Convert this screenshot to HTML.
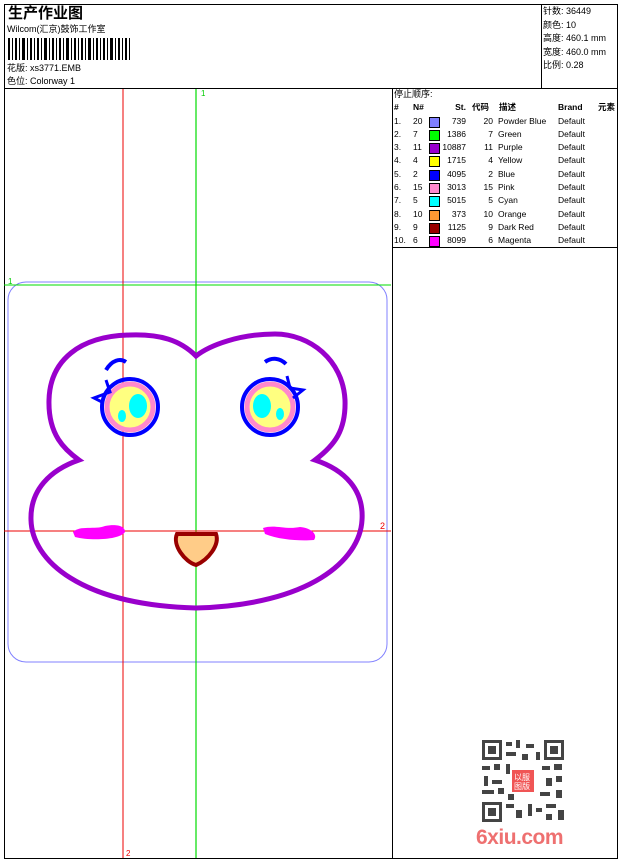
<!DOCTYPE html>
<html><head><meta charset="utf-8"><style>
body{margin:0;width:620px;height:860px;background:#fff;font-family:"Liberation Sans","Noto Sans CJK SC",sans-serif;position:relative;overflow:hidden;color:#000}
.a{position:absolute}
.t{font-size:9px;line-height:13px}
.r{position:absolute;left:393px;width:224px;height:13px;font-size:8.5px;line-height:13px;white-space:nowrap}
.r span{position:absolute}
.c1{left:1px}.c2{left:20px}.sw{left:36px;top:2px;width:9px;height:9px;border:1px solid #000}
.c3{right:151px;text-align:right}.c4{right:124px}.c5{left:105px}.c6{left:165px}.c7{right:2px}
</style></head><body>
<div class="a" style="left:4px;top:4px;width:612px;height:853px;border:1px solid #000"></div>
<div class="a" style="left:4px;top:88px;width:613px;border-top:1px solid #000"></div>
<div class="a" style="left:541px;top:4px;height:84px;border-left:1px solid #000"></div>
<div class="a" style="left:392px;top:88px;height:770px;border-left:1px solid #000"></div>
<div class="a" style="left:392px;top:247px;width:225px;border-top:1px solid #000"></div>
<div class="a" style="left:8px;top:2px;font-size:15px;font-weight:bold">生产作业图</div>
<div class="a t" style="left:7px;top:23px">Wilcom(汇京)鼓饰工作室</div>
<svg class="a" style="left:8px;top:38px" width="125" height="22"><g fill="#000">
<rect x="0" y="0" width="2" height="22"/><rect x="4" y="0" width="1" height="22"/><rect x="7" y="0" width="2" height="22"/><rect x="11" y="0" width="1" height="22"/><rect x="14" y="0" width="3" height="22"/><rect x="19" y="0" width="1" height="22"/><rect x="22" y="0" width="2" height="22"/><rect x="26" y="0" width="1" height="22"/><rect x="29" y="0" width="2" height="22"/><rect x="33" y="0" width="1" height="22"/><rect x="36" y="0" width="3" height="22"/><rect x="41" y="0" width="1" height="22"/><rect x="44" y="0" width="2" height="22"/><rect x="48" y="0" width="1" height="22"/><rect x="51" y="0" width="2" height="22"/><rect x="55" y="0" width="1" height="22"/><rect x="58" y="0" width="3" height="22"/><rect x="63" y="0" width="1" height="22"/><rect x="66" y="0" width="2" height="22"/><rect x="70" y="0" width="1" height="22"/><rect x="73" y="0" width="2" height="22"/><rect x="77" y="0" width="1" height="22"/><rect x="80" y="0" width="3" height="22"/><rect x="85" y="0" width="1" height="22"/><rect x="88" y="0" width="2" height="22"/><rect x="92" y="0" width="1" height="22"/><rect x="95" y="0" width="2" height="22"/><rect x="99" y="0" width="1" height="22"/><rect x="102" y="0" width="3" height="22"/><rect x="107" y="0" width="1" height="22"/><rect x="110" y="0" width="2" height="22"/><rect x="114" y="0" width="1" height="22"/><rect x="117" y="0" width="2" height="22"/><rect x="121" y="0" width="1" height="22"/></g></svg>
<div class="a t" style="left:7px;top:62px">花版: xs3771.EMB</div>
<div class="a t" style="left:7px;top:75px">色位: Colorway 1</div>
<div class="a t" style="left:543px;top:5px;line-height:13.5px">针数: 36449<br>颜色: 10<br>高度: 460.1 mm<br>宽度: 460.0 mm<br>比例: 0.28</div>
<div class="a t" style="left:394px;top:88px">停止顺序:</div>
<div class="r" style="top:101px;font-weight:bold;text-decoration:underline"><span class="c1">#</span><span class="c2">N#</span><span class="c3">St.</span><span style="left:79px">代码</span><span style="left:106px">描述</span><span class="c6">Brand</span><span class="c7">元素</span></div>
<div class="r" style="top:115px"><span class="c1">1.</span><span class="c2">20</span><span class="sw" style="background:#8080ff"></span><span class="c3">739</span><span class="c4">20</span><span class="c5">Powder Blue</span><span class="c6">Default</span></div>
<div class="r" style="top:128px"><span class="c1">2.</span><span class="c2">7</span><span class="sw" style="background:#00ff00"></span><span class="c3">1386</span><span class="c4">7</span><span class="c5">Green</span><span class="c6">Default</span></div>
<div class="r" style="top:141px"><span class="c1">3.</span><span class="c2">11</span><span class="sw" style="background:#9900cc"></span><span class="c3">10887</span><span class="c4">11</span><span class="c5">Purple</span><span class="c6">Default</span></div>
<div class="r" style="top:154px"><span class="c1">4.</span><span class="c2">4</span><span class="sw" style="background:#ffff00"></span><span class="c3">1715</span><span class="c4">4</span><span class="c5">Yellow</span><span class="c6">Default</span></div>
<div class="r" style="top:168px"><span class="c1">5.</span><span class="c2">2</span><span class="sw" style="background:#0000ff"></span><span class="c3">4095</span><span class="c4">2</span><span class="c5">Blue</span><span class="c6">Default</span></div>
<div class="r" style="top:181px"><span class="c1">6.</span><span class="c2">15</span><span class="sw" style="background:#ff88cc"></span><span class="c3">3013</span><span class="c4">15</span><span class="c5">Pink</span><span class="c6">Default</span></div>
<div class="r" style="top:194px"><span class="c1">7.</span><span class="c2">5</span><span class="sw" style="background:#00ffff"></span><span class="c3">5015</span><span class="c4">5</span><span class="c5">Cyan</span><span class="c6">Default</span></div>
<div class="r" style="top:208px"><span class="c1">8.</span><span class="c2">10</span><span class="sw" style="background:#ff9933"></span><span class="c3">373</span><span class="c4">10</span><span class="c5">Orange</span><span class="c6">Default</span></div>
<div class="r" style="top:221px"><span class="c1">9.</span><span class="c2">9</span><span class="sw" style="background:#990000"></span><span class="c3">1125</span><span class="c4">9</span><span class="c5">Dark Red</span><span class="c6">Default</span></div>
<div class="r" style="top:234px"><span class="c1">10.</span><span class="c2">6</span><span class="sw" style="background:#ff00ff"></span><span class="c3">8099</span><span class="c4">6</span><span class="c5">Magenta</span><span class="c6">Default</span></div>
<svg class="a" style="left:0;top:0" width="392" height="860">
<rect x="8" y="282" width="379" height="380" rx="18" fill="none" stroke="#8080ff" stroke-width="1"/>
<line x1="123" y1="89" x2="123" y2="858" stroke="#e00" stroke-width="1"/>
<line x1="196" y1="89" x2="196" y2="858" stroke="#0d0" stroke-width="1.2"/>
<line x1="4" y1="285" x2="391" y2="285" stroke="#0d0" stroke-width="1"/>
<line x1="4" y1="531" x2="391" y2="531" stroke="#e00" stroke-width="1"/>
<text x="201" y="96" font-size="8" fill="#0c0">1</text>
<text x="8" y="284" font-size="8" fill="#0c0">1</text>
<text x="380" y="529" font-size="9" fill="#e00">2</text>
<text x="126" y="856" font-size="8" fill="#e00">2</text>
<path d="M196 356 C180 340 160 334 130 335 C80 336 50 360 49 400 C48 435 65 450 79 460 C50 470 30 490 31 520 C32 560 80 605 196 608 C310 605 360 560 362 520 C364 490 345 470 315 460 C335 445 346 430 345 400 C343 360 310 334 275 334 C240 334 210 345 196 356 Z" fill="none" stroke="#9900cc" stroke-width="5"/>
<circle cx="130" cy="407" r="28" fill="none" stroke="#0000ff" stroke-width="4"/>
<circle cx="130" cy="407" r="23" fill="#ffff80" stroke="#ff88cc" stroke-width="5"/>
<ellipse cx="138" cy="406" rx="9" ry="12" fill="#00ffff"/><ellipse cx="122" cy="416" rx="4" ry="6" fill="#00ffff"/>
<circle cx="270" cy="407" r="28" fill="none" stroke="#0000ff" stroke-width="4"/>
<circle cx="270" cy="407" r="23" fill="#ffff80" stroke="#ff88cc" stroke-width="5"/>
<ellipse cx="262" cy="406" rx="9" ry="12" fill="#00ffff"/><ellipse cx="280" cy="414" rx="4" ry="6" fill="#00ffff"/>
<path d="M106 370 C112 360 120 358 126 362" fill="none" stroke="#0000ff" stroke-width="4"/>
<path d="M265 362 C272 357 280 358 286 364" fill="none" stroke="#0000ff" stroke-width="4"/>
<path d="M106 380 L110 392 L94 398 L102 402" fill="none" stroke="#0000ff" stroke-width="3"/>
<path d="M287 376 L290 388 L303 390 L293 398" fill="none" stroke="#0000ff" stroke-width="3"/>
<path d="M73 532 C80 525 95 530 105 526 C115 524 125 525 125 532 C120 540 90 541 75 537 Z" fill="#ff00ff"/>
<path d="M263 528 C275 524 285 530 300 527 C312 528 318 535 314 540 C300 541 280 540 265 534 Z" fill="#ff00ff"/>
<path d="M177 534 L216 534 C220 545 208 560 196 565 C185 562 172 545 177 534 Z" fill="#ffcc88" stroke="#990000" stroke-width="4"/>
</svg>
<svg class="a" style="left:480px;top:738px" width="86" height="86">
<rect width="86" height="86" fill="#fff"/>
<g fill="#444">
<rect x="2" y="2" width="20" height="20"/><rect x="64" y="2" width="20" height="20"/><rect x="2" y="64" width="20" height="20"/>
<rect x="26" y="4" width="6" height="4"/><rect x="36" y="2" width="4" height="8"/><rect x="46" y="6" width="8" height="4"/><rect x="26" y="14" width="10" height="4"/><rect x="42" y="16" width="6" height="6"/><rect x="56" y="14" width="4" height="8"/>
<rect x="2" y="28" width="8" height="4"/><rect x="14" y="26" width="6" height="6"/><rect x="26" y="26" width="4" height="10"/><rect x="62" y="28" width="8" height="4"/><rect x="74" y="26" width="8" height="6"/>
<rect x="4" y="38" width="4" height="10"/><rect x="12" y="42" width="10" height="4"/><rect x="66" y="40" width="6" height="8"/><rect x="76" y="38" width="6" height="6"/>
<rect x="2" y="52" width="12" height="4"/><rect x="18" y="50" width="6" height="6"/><rect x="28" y="56" width="6" height="6"/><rect x="60" y="54" width="10" height="4"/><rect x="76" y="52" width="6" height="8"/>
<rect x="26" y="66" width="8" height="4"/><rect x="36" y="72" width="6" height="8"/><rect x="48" y="66" width="4" height="12"/><rect x="56" y="70" width="6" height="4"/><rect x="66" y="66" width="10" height="4"/><rect x="66" y="76" width="6" height="6"/><rect x="78" y="72" width="6" height="10"/>
</g>
<g fill="#fff"><rect x="5" y="5" width="14" height="14"/><rect x="67" y="5" width="14" height="14"/><rect x="5" y="67" width="14" height="14"/></g>
<g fill="#444"><rect x="8" y="8" width="8" height="8"/><rect x="70" y="8" width="8" height="8"/><rect x="8" y="70" width="8" height="8"/></g>
<rect x="32" y="32" width="22" height="22" fill="#f05555"/>
<text x="34" y="42" font-size="8" fill="#fff" font-family="Noto Sans CJK SC">以服</text><text x="34" y="51" font-size="8" fill="#fff" font-family="Noto Sans CJK SC">图版</text>
</svg>
<div class="a" style="left:476px;top:826px;font-size:21px;font-weight:bold;color:#ee7070;letter-spacing:-0.5px">6xiu.com</div>
</body></html>
